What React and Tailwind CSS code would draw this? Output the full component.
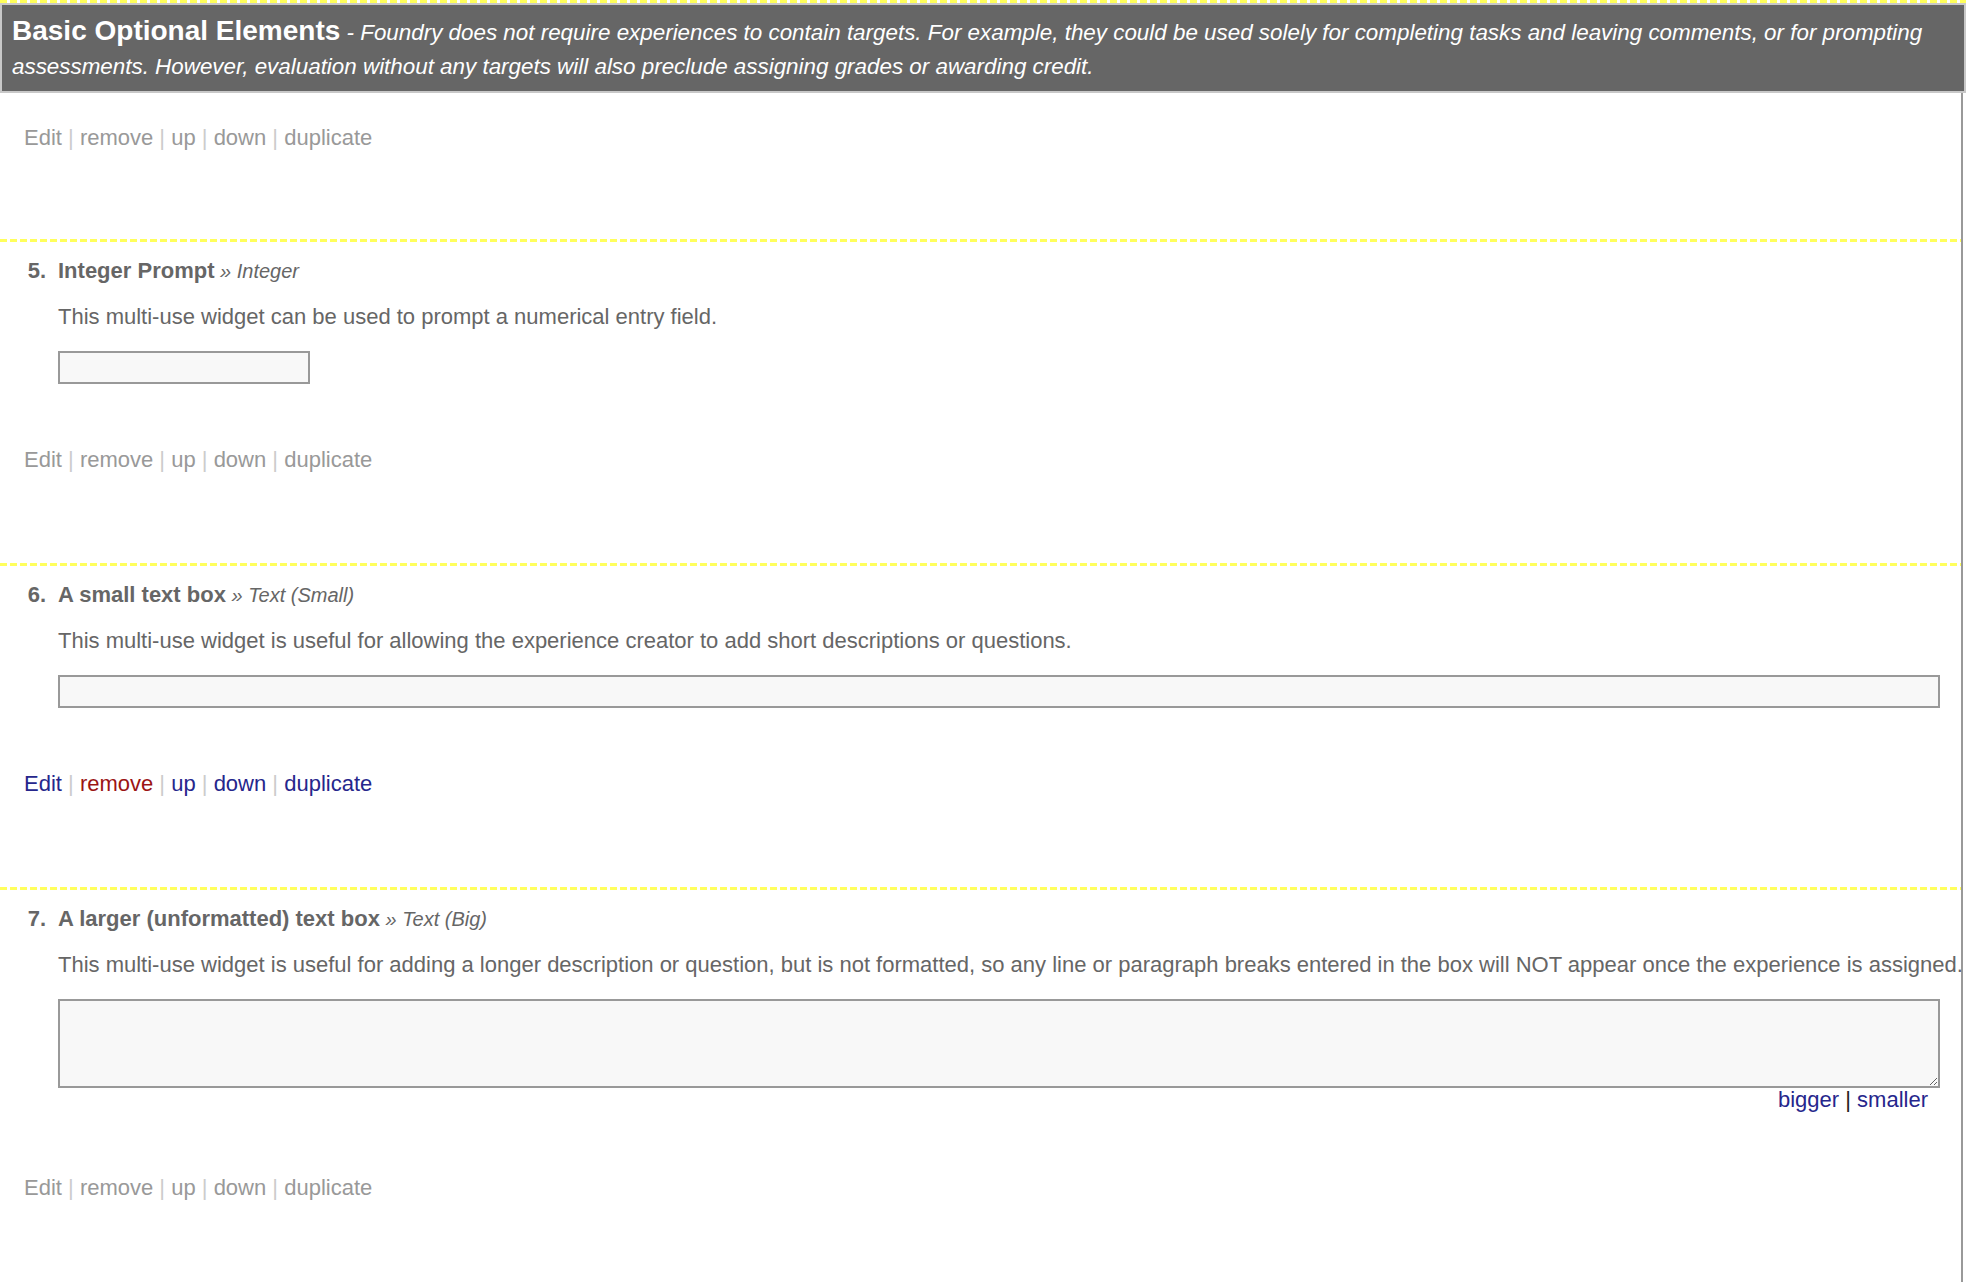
const Dashes = () => (
    <div className="h-[3px] w-full bg-[repeating-linear-gradient(90deg,#ffff5c_0px,#ffff5c_7px,transparent_7px,transparent_10px)]"/>
);

const ActionLinks = ({active}) => {
    const items = ["Edit", "remove", "up", "down", "duplicate"];
    return (
        <div className="pl-[24px] text-[22px] leading-[28px]">
            {items.map((label, i) => (
                <span key={label}>
                    {i > 0 && <span className="text-[#cccccc]"> | </span>}
                    <span
                        className={
                            active
                                ? label === "remove"
                                    ? "text-[#9b1414]"
                                    : "text-[#26268c]"
                                : "text-[#999999]"
                        }
                    >
                        {label}
                    </span>
                </span>
            ))}
        </div>
    );
};

const Item = ({num, title, kind, desc, active, children, nowrap}) => (
    <div>
        <Dashes/>
        <div className="pt-[15px] pb-[89px]">
            <div className="flex text-[22px] leading-[28px] text-[#666666]">
                <span className="w-[46px] shrink-0 text-right font-bold">{num}.</span>
                <div className="ml-[12px] flex-1">
                    <div>
                        <span className="font-bold">{title}</span>
                        <span className="text-[20px] italic"> » {kind}</span>
                    </div>
                    <p className={"mt-[18px]" + (nowrap ? " whitespace-nowrap" : "")}>{desc}</p>
                    <div className="mt-[20px]">{children}</div>
                </div>
            </div>
            <div className="mt-[62px]">
                <ActionLinks active={active}/>
            </div>
        </div>
    </div>
);

export default function App() {
    return (
        <div className="min-h-screen w-[1966px] overflow-hidden bg-white font-['Liberation_Sans',Arial,sans-serif]">
            <Dashes/>
            <div className="border-2 border-[#c8c8c8] bg-[#666666] pl-[10px] pr-[8px] pt-[9px] pb-[7px] text-[22.4px] leading-[34px] text-white">
                <span className="text-[28px] font-bold leading-[34px]">Basic Optional Elements</span>
                <span className="italic"> - Foundry does not require experiences to contain targets. For example, they could be used solely for completing tasks and leaving comments, or for prompting assessments. However, evaluation without any targets will also preclude assigning grades or awarding credit.</span>
            </div>

            <div className="w-[1963px] border-r-2 border-[#999999]">
                <div className="pt-[31px] pb-[87px]">
                    <ActionLinks/>
                </div>

                <Item
                    num={5}
                    title="Integer Prompt"
                    kind="Integer"
                    desc="This multi-use widget can be used to prompt a numerical entry field."
                >
                    <input
                        type="text"
                        className="block h-[33px] w-[252px] border-2 border-[#999999] bg-[#f8f8f8] outline-none"
                    />
                </Item>

                <Item
                    num={6}
                    title="A small text box"
                    kind="Text (Small)"
                    desc="This multi-use widget is useful for allowing the experience creator to add short descriptions or questions."
                    active
                >
                    <input
                        type="text"
                        className="block h-[33px] w-[1882px] border-2 border-[#999999] bg-[#f8f8f8] outline-none"
                    />
                </Item>

                <Item
                    num={7}
                    title="A larger (unformatted) text box"
                    kind="Text (Big)"
                    desc="This multi-use widget is useful for adding a longer description or question, but is not formatted, so any line or paragraph breaks entered in the box will NOT appear once the experience is assigned."
                    nowrap
                >
                    <textarea className="block h-[89px] w-[1882px] resize border-2 border-[#999999] bg-[#f8f8f8] outline-none"/>
                    <div className="w-[1882px] pr-[12px] text-right leading-[24px]">
                        <span className="text-[#26268c]">bigger</span>
                        <span className="text-[#222222]"> | </span>
                        <span className="text-[#26268c]">smaller</span>
                    </div>
                </Item>
            </div>
        </div>
    );
}
